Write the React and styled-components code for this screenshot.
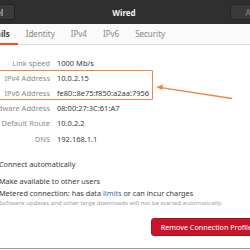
import React from "react";
import styled, { createGlobalStyle } from "styled-components";

const Global = createGlobalStyle`
  html, body { margin: 0; padding: 0; background: #ffffff; }
  body { width: 250px; height: 250px; overflow: hidden; font-family: "Noto Sans", "DejaVu Sans", sans-serif; }
  #root { width: 250px; height: 250px; overflow: hidden; position: relative; }
`;

const Frame = styled.div`
  width: 250px;
  height: 250px;
  overflow: hidden;
  position: relative;
  background: #ffffff;
`;

const Window = styled.div`
  width: 328px;
  margin-left: -40px;
  height: 248px;
  background: #ffffff;
  border-bottom: 1px solid #9a9a9a;
  display: flex;
  flex-direction: column;
`;

const HeaderBar = styled.div`
  height: 24px;
  background: #2f2f2f;
  display: flex;
  align-items: center;
  justify-content: space-between;
  padding: 0 6px;
  box-sizing: border-box;
  position: relative;
`;

const HeaderButton = styled.div`
  height: 16px;
  min-width: ${(p) => p.$w}px;
  box-sizing: border-box;
  border: 1px solid #242424;
  border-radius: 3px;
  background: #3a3a3a;
  color: ${(p) => (p.$dim ? "#8c8c8c" : "#e8e8e8")};
  font-size: 8px;
  display: flex;
  align-items: center;
  justify-content: center;
`;

const Title = styled.div`
  position: absolute;
  left: 0;
  right: 0;
  text-align: center;
  color: #f0f0f0;
  font-weight: 700;
  font-size: 8px;
  pointer-events: none;
`;

const TabBar = styled.div`
  height: 20px;
  background: #fafafa;
  border-bottom: 1px solid #dcdcdc;
  display: flex;
  align-items: stretch;
  padding-left: 14px;
`;

const Tab = styled.div`
  padding: 0 8px;
  display: flex;
  align-items: center;
  font-size: 8px;
  color: ${(p) => (p.$active ? "#3c3c3c" : "#858585")};
  font-weight: ${(p) => (p.$active ? 700 : 400)};
  border-bottom: 2px solid ${(p) => (p.$active ? "#e95420" : "transparent")};
  margin-bottom: -1px;
`;

const Body = styled.div`
  display: flex;
  flex-direction: column;
  padding-top: 10px;
`;

const InfoGrid = styled.div`
  display: grid;
  grid-template-columns: 90px 1fr;
  column-gap: 7px;
  grid-auto-rows: 15.2px;
  align-items: center;
  font-size: 7.5px;
`;

const Label = styled.div`
  text-align: right;
  color: #8a8a8a;
  white-space: nowrap;
`;

const Value = styled.div`
  color: #3a3a3a;
  white-space: nowrap;
`;

const CheckList = styled.div`
  display: flex;
  flex-direction: column;
  margin-top: 9px;
  padding-left: 21px;
`;

const CheckRow = styled.div`
  display: flex;
  align-items: center;
  gap: 7px;
  height: 17px;
  font-size: 7.3px;
  color: #3a3a3a;
  white-space: nowrap;
`;

const Box = styled.div`
  width: 11px;
  height: 11px;
  border: 1px solid #b8b8b8;
  border-radius: 2px;
  box-sizing: border-box;
  background: #fff;
`;

const MeteredText = styled.div`
  display: flex;
  flex-direction: column;
  line-height: 9px;
`;

const Sub = styled.span`
  font-size: 6.1px;
  color: #a0a0a0;
`;

const LinkWord = styled.span`
  color: #3f6aa3;
`;

const Footer = styled.div`
  display: flex;
  justify-content: flex-end;
  padding: 12px 26px 0 0;
`;

const DangerButton = styled.div`
  height: 18px;
  box-sizing: border-box;
  padding: 0 9px;
  border-radius: 3px;
  background: #c7162b;
  border: 1px solid #a8121f;
  color: #ffffff;
  font-size: 7.2px;
  display: flex;
  align-items: center;
  white-space: nowrap;
`;

const Highlight = styled.div`
  position: absolute;
  left: -4px;
  top: 70px;
  width: 157px;
  height: 30px;
  border: 1.5px solid #f5823f;
  box-sizing: border-box;
  border-radius: 1px;
`;

const ArrowSvg = styled.svg`
  position: absolute;
  left: 0;
  top: 0;
  pointer-events: none;
`;

const rows = [
  ["Link speed", "1000 Mb/s"],
  ["IPv4 Address", "10.0.2.15"],
  ["IPv6 Address", "fe80::8e75:f850:a2aa:7956"],
  ["Hardware Address", "08:00:27:3C:61:A7"],
  ["Default Route", "10.0.2.2"],
  ["DNS", "192.168.1.1"],
];

export default function App() {
  return (
    <Frame>
      <Global />
      <Window>
        <HeaderBar>
          <HeaderButton $w={49}>Cancel</HeaderButton>
          <Title>Wired</Title>
          <HeaderButton $w={52} $dim>Apply</HeaderButton>
        </HeaderBar>
        <TabBar>
          <Tab $active>Details</Tab>
          <Tab>Identity</Tab>
          <Tab>IPv4</Tab>
          <Tab>IPv6</Tab>
          <Tab>Security</Tab>
        </TabBar>
        <Body>
          <InfoGrid>
            {rows.map(([l, v]) => (
              <React.Fragment key={l}>
                <Label>{l}</Label>
                <Value>{v}</Value>
              </React.Fragment>
            ))}
          </InfoGrid>
          <CheckList>
            <CheckRow><Box />Connect automatically</CheckRow>
            <CheckRow><Box />Make available to other users</CheckRow>
            <CheckRow>
              <Box />
              <MeteredText>
                <span>Metered connection: has data <LinkWord>limits</LinkWord> or can incur charges</span>
                <Sub>Software updates and other large downloads will not be started automatically.</Sub>
              </MeteredText>
            </CheckRow>
          </CheckList>
          <Footer>
            <DangerButton>Remove Connection Profile</DangerButton>
          </Footer>
        </Body>
      </Window>
      <Highlight />
      <ArrowSvg width="250" height="250" viewBox="0 0 250 250">
        <line x1="232" y1="98.5" x2="161" y2="87.6" stroke="#f5823f" strokeWidth="1.4" />
        <polygon points="156,87 163,84.6 162.2,90" fill="#f5823f" />
      </ArrowSvg>
    </Frame>
  );
}
